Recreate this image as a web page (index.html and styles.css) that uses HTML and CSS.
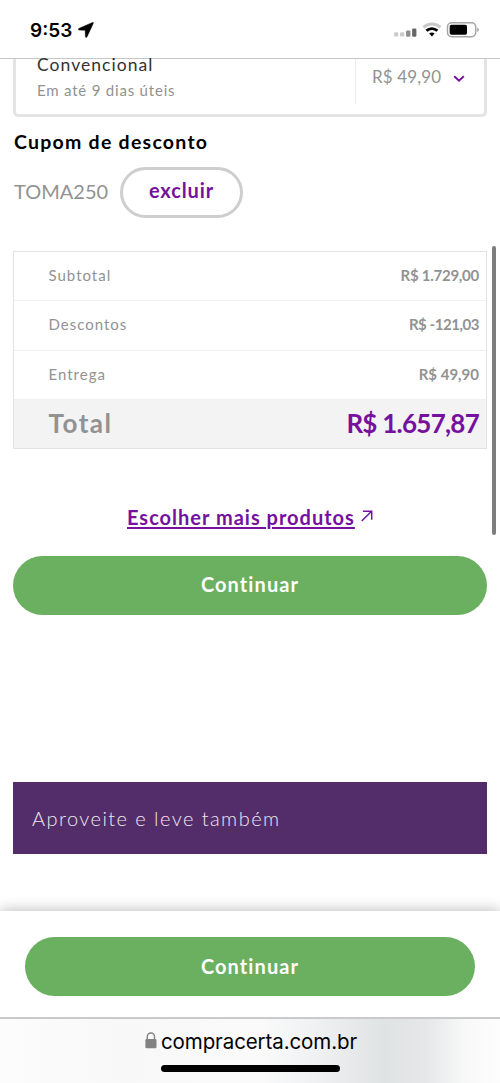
FILE: index.html
```html
<!DOCTYPE html>
<html lang="pt-BR">
<head>
<meta charset="utf-8">
<title>Carrinho</title>
<link rel="stylesheet" href="styles.css">
</head>
<body>
<header class="status">
  <div class="clock"><span class="time">9:53</span>
    <svg class="location" width="16" height="16" viewBox="0 0 16 16"><path d="M14.6.4.9 6.4c-.9.4-.7 1.7.3 1.7l6 .1.2 6.3c0 1.1 1.3 1.2 1.7.2l6.1-13.2c.3-.8 0-1.3-.6-1.1z" stroke="#000" stroke-width=".5"/></svg>
  </div>
  <svg class="indicators" width="88" height="18" viewBox="0 0 88 18">
    <rect x="1" y="11.2" width="4.3" height="4.3" rx="1.2" fill="#ccc"/><rect x="7" y="11.2" width="4.3" height="4.3" rx="1.2" fill="#ccc"/><rect x="13.1" y="9.6" width="4.3" height="6.2" rx="1.2" fill="#8d8d8d"/><rect x="19.1" y="7.6" width="4.3" height="8.2" rx="1.2" fill="#666"/>
    <path d="M30.4 6.3a12.4 12.4 0 0 1 17 0" fill="none" stroke="#c9c9c9" stroke-width="3"/>
    <path d="M33.4 9.8a8 8 0 0 1 11 0" fill="none" stroke="#000" stroke-width="2.9"/>
    <path d="M36.2 12.6a4.2 4.2 0 0 1 5.4 0l-2.7 2.9z"/>
    <rect x="54.5" y="1.8" width="28.2" height="14" rx="4.2" fill="none" stroke="#a5a5a5" stroke-width="1.5"/>
    <rect x="56.7" y="3.8" width="17.3" height="10" rx="1.8"/>
    <path d="M84.4 6.5v4.5c1.8-.7 1.8-3.8 0-4.5z" fill="#888"/>
  </svg>
</header>
<main class="page">
  <section class="shipping">
    <div class="method"><div class="name">Convencional</div><div class="eta">Em até 9 dias úteis</div></div>
    <div class="cost"><span class="cost-value">R$ 49,90</span>
      <svg width="12" height="8" viewBox="0 0 12 8"><path d="M1.2 1.2 6 5.7l4.8-4.5" fill="none" stroke="#76109f" stroke-width="1.9"/></svg>
    </div>
  </section>
  <h2 class="heading">Cupom de desconto</h2>
  <div class="coupon"><span class="code">TOMA250</span><button class="remove">excluir</button></div>
  <section class="summary">
    <div class="row"><span>Subtotal</span><b>R$ 1.729,00</b></div>
    <div class="row"><span>Descontos</span><b class="discount">R$ -121,03</b></div>
    <div class="row"><span>Entrega</span><b class="delivery">R$ 49,90</b></div>
    <div class="row total"><span>Total</span><b>R$ 1.657,87</b></div>
  </section>
  <div class="more"><a class="more-link">Escolher mais produtos</a>
    <svg width="12" height="12" viewBox="0 0 12 12"><path d="M.7 11 10.6 1.2M1.9 1.2h8.8v8.6" fill="none" stroke="#76109f" stroke-width="1.5"/></svg>
  </div>
  <button class="continue">Continuar</button>
  <div class="banner">Aproveite e leve também</div>
  <div class="scrollbar"></div>
</main>
<div class="sticky"><button class="continue">Continuar</button></div>
<footer class="browser">
  <div class="address"><svg width="12" height="17" viewBox="0 0 12 17"><path d="M2.3 8V4.6a3.6 3.6 0 0 1 7.2 0V8" fill="none" stroke="#828283" stroke-width="1.4"/><rect x=".4" y="7.1" width="11.1" height="9.1" rx="1.3" fill="#828283"/></svg><span class="url">compracerta.com.br</span></div>
  <div class="home"></div>
</footer>
</body>
</html>
```
FILE: styles.css
```css
* { box-sizing: border-box; }
body { margin: 0; width: 500px; height: 1083px; overflow: hidden; display: flex; flex-direction: column; background: #fff; font-family: Lato, "Open Sans", sans-serif; color: #929292; }
svg { display: block; flex: none; }
span, b, a { white-space: nowrap; }
button { font: inherit; border: 0; padding: 0; }
.status { height: 59px; flex: none; border-bottom: 1px solid #c6c6c6; display: flex; justify-content: space-between; padding: 0 19px 0 30px; }
.clock { display: flex; gap: 6px; padding-top: 19px; font: 600 19px/24px Inter, sans-serif; color: #000; }
.location { margin-top: 3px; }
.indicators { margin-top: 21px; }
.page { position: relative; height: 852px; flex: none; padding: 0 13px; display: flex; flex-direction: column; }
.shipping { height: 58px; flex: none; border: 3px solid #e4e4e4; border-top: 0; border-radius: 0 0 5px 5px; display: flex; justify-content: space-between; padding-left: 21px; }
.name { font-size: 17.5px; line-height: 22px; color: #333; margin-top: -5px; letter-spacing: 1.05px; }
.eta { font-size: 15px; line-height: 20px; margin-top: 4px; letter-spacing: .8px; }
.cost { width: 129px; height: 45px; border-left: 1px solid #ececec; padding: 6px 19px 0 16px; display: flex; justify-content: space-between; font-size: 17px; line-height: 24px; }
.cost-value { letter-spacing: .15px; }
.cost svg { margin-top: 10px; }
.heading { margin: 12px 0 0 1px; font-size: 19.5px; line-height: 26px; color: #000; font-weight: 700; letter-spacing: 1.25px; }
.coupon { display: flex; margin-top: 12px; height: 51px; }
.code { width: 107px; padding-left: 1px; font-size: 20px; line-height: 48px; }
.remove { width: 123px; height: 51px; border: 3px solid #cecece; border-radius: 26px; background: #fff; color: #76109f; font-size: 20px; font-weight: 700; line-height: 41px; padding-bottom: 4px; letter-spacing: .9px; }
.summary { margin-top: 33px; height: 198px; flex: none; border: 1px solid #e2e2e2; display: grid; grid-template-rows: 49px 50px 49px 48px; }
.row { display: flex; justify-content: space-between; padding: 0 7px 0 34.5px; font-size: 15px; line-height: 46px; border-bottom: 1px solid #f0f0f0; letter-spacing: 1px; }
.row b { font-weight: 700; letter-spacing: -.25px; }
.row .discount { letter-spacing: -.45px; }
.row .delivery { letter-spacing: 0; }
.total { background: #f3f3f3; font-size: 26px; font-weight: 700; line-height: 46px; border: 0; letter-spacing: 1.5px; }
.total b { color: #76109f; letter-spacing: -.75px; }
.more { margin: 55px 0 0 114px; display: flex; gap: 6px; height: 26px; font-size: 20px; line-height: 26px; font-weight: 700; }
.more-link { color: #76109f; text-decoration: underline; text-decoration-thickness: 1.5px; text-underline-offset: 2px; letter-spacing: 1px; }
.more svg { margin-top: 6px; }
.continue { display: block; width: 100%; height: 59px; flex: none; border-radius: 30px; background: #6bb060; color: #fff; font-size: 20px; font-weight: 700; line-height: 56px; padding-bottom: 3px; letter-spacing: 1.1px; }
.page .continue { margin-top: 26px; }
.banner { margin-top: 167px; height: 72px; flex: none; background: #532d69; color: #eee7f2; padding-left: 19px; font-size: 20px; font-weight: 300; line-height: 73px; letter-spacing: 1.45px; }
.scrollbar { position: absolute; right: 4px; top: 187px; width: 4px; height: 289px; border-radius: 2px; background: #7e7e7e; }
.sticky { position: relative; height: 106px; flex: none; padding: 26px 25px 0; background: #fff; box-shadow: 0 0 14px rgba(0, 0, 0, .3); }
.sticky .continue { padding-bottom: 1px; }
.browser { position: relative; height: 66px; flex: none; border-top: 2px solid #c9c9cb; background: linear-gradient(90deg, #fcfcfc 0, #f8f8f8 25%, #fafafa 52%, #f0f2f3 62%, #e0e3e4 77%, #e5e7e8 85%, #f8f8f8 93%, #fdfdfd); display: flex; flex-direction: column; align-items: center; }
.address { width: 212px; height: 30px; margin-top: 8px; display: flex; gap: 4px; color: #000; font: 20.5px/30px Inter, sans-serif; padding-left: 1px; }
.address svg { margin-top: 5px; }
.url { letter-spacing: -.1px; }
.home { width: 179px; height: 7px; margin-top: 8px; background: #000; border-radius: 4px; }
```
